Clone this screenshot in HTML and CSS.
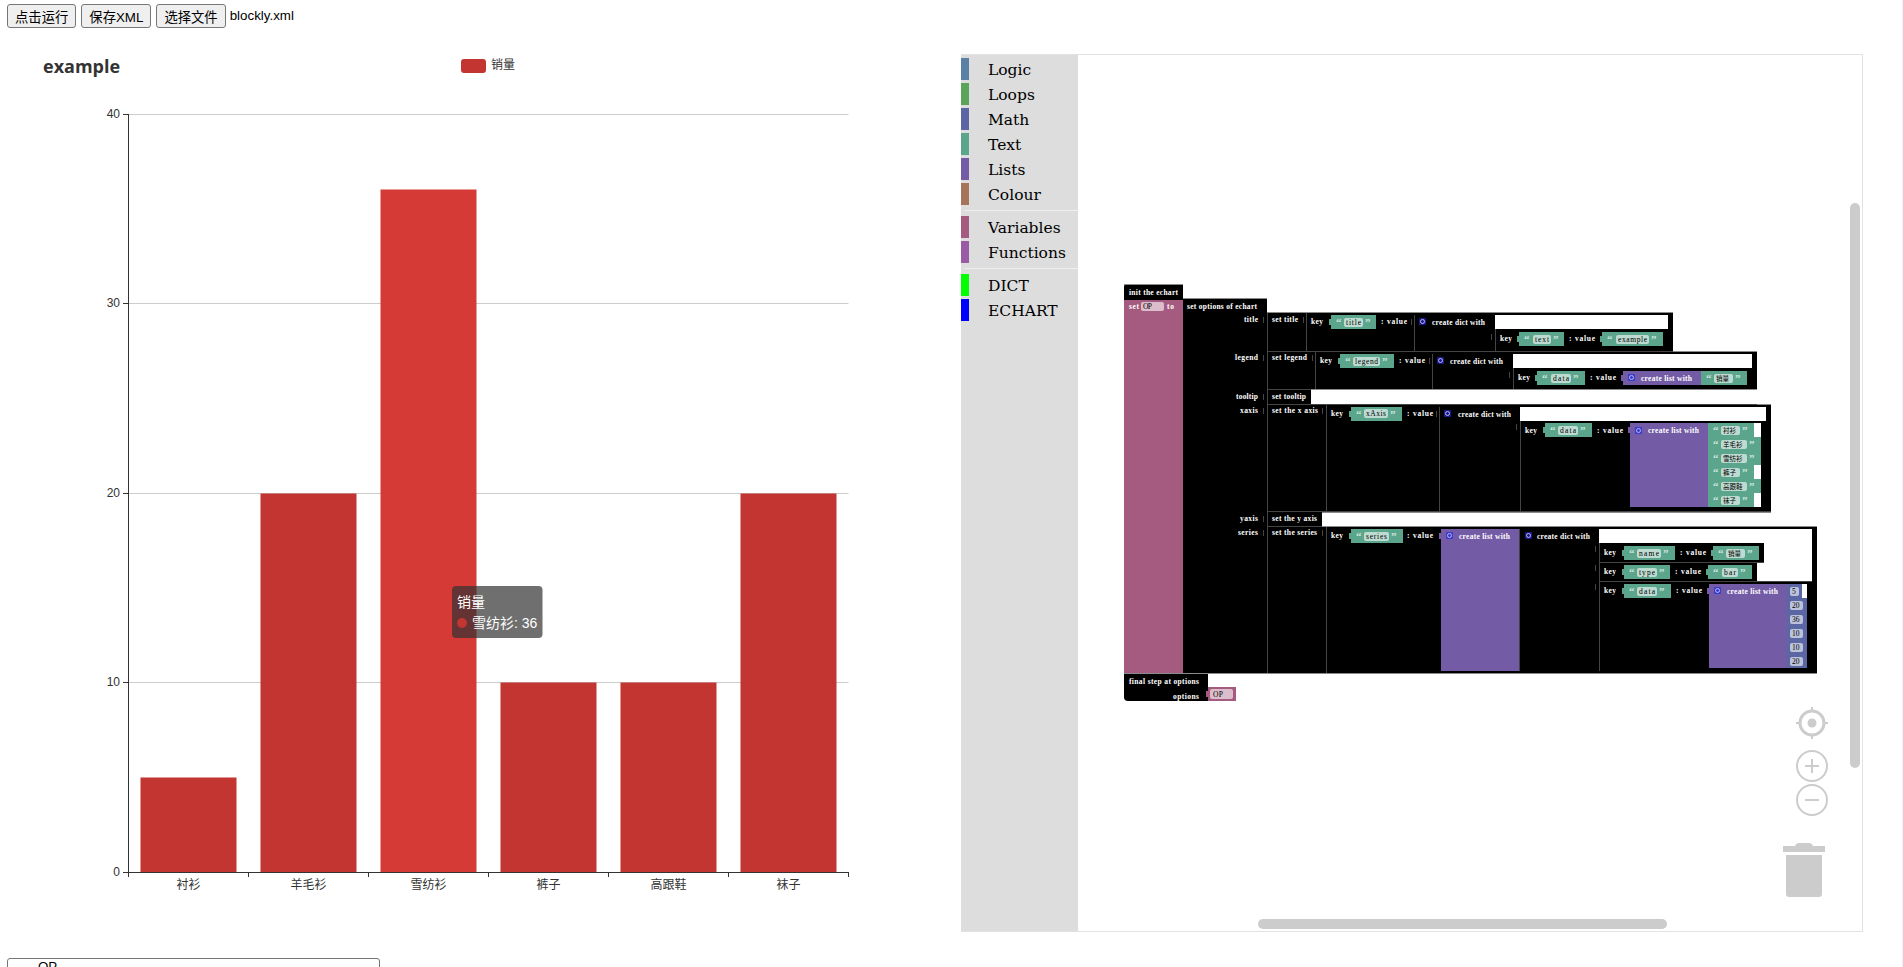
FILE: index.html
```html
<!DOCTYPE html>
<html lang="en">

<head>
    <title>Blockly echarts</title>
    <meta name="viewport" content="width=device-width, initial-scale=1.0">
    <link rel="stylesheet" href="styles.css">
</head>

<body>
    <div class="toolbar">
        <button>点击运行</button>
        <button>保存XML</button>
        <button>选择文件</button>
        <span class="file-name">blockly.xml</span>
    </div>

    <div class="main">
        <svg class="chart" width="961" height="900" viewBox="0 28 961 900">
            <text class="chart-title" x="43" y="73">example</text>
            <rect class="bar" x="461" y="59" width="25" height="14" rx="3"/>
            <text class="axis-text" x="491" y="69">销量</text>

            <path class="grid" d="M128.5 114.5H848.5M128.5 303.5H848.5M128.5 493.5H848.5M128.5 682.5H848.5"/>

            <rect class="bar" x="140.5" y="777.5" width="96" height="95"/>
            <rect class="bar" x="260.5" y="493.5" width="96" height="379"/>
            <rect class="bar-hover" x="380.5" y="189.5" width="96" height="683"/>
            <rect class="bar" x="500.5" y="682.5" width="96" height="190"/>
            <rect class="bar" x="620.5" y="682.5" width="96" height="190"/>
            <rect class="bar" x="740.5" y="493.5" width="96" height="379"/>

            <path class="axis" d="M128.5 114V872.5M123 114.5H128.5M123 303.5H128.5M123 493.5H128.5M123 682.5H128.5M123 872.5H848.5"/>
            <path class="axis" d="M128.5 872V877M248.5 872V877M368.5 872V877M488.5 872V877M608.5 872V877M728.5 872V877M848.5 872V877"/>

            <text class="axis-text y-label" x="120" y="118">40</text>
            <text class="axis-text y-label" x="120" y="307">30</text>
            <text class="axis-text y-label" x="120" y="497">20</text>
            <text class="axis-text y-label" x="120" y="686">10</text>
            <text class="axis-text y-label" x="120" y="876">0</text>

            <text class="axis-text x-label" x="188.5" y="889">衬衫</text>
            <text class="axis-text x-label" x="308.5" y="889">羊毛衫</text>
            <text class="axis-text x-label" x="428.5" y="889">雪纺衫</text>
            <text class="axis-text x-label" x="548.5" y="889">裤子</text>
            <text class="axis-text x-label" x="668.5" y="889">高跟鞋</text>
            <text class="axis-text x-label" x="788.5" y="889">袜子</text>

            <rect class="tooltip" x="452" y="586" width="90.5" height="52" rx="4"/>
            <text class="tooltip-text" x="457" y="607">销量</text>
            <circle class="bar" cx="462" cy="623" r="5"/>
            <text class="tooltip-text" x="472" y="628">雪纺衫: 36</text>
        </svg>

        <div class="workspace">
            <div class="toolbox">
                <div class="category"><span class="swatch logic"></span>Logic</div>
                <div class="category"><span class="swatch loops"></span>Loops</div>
                <div class="category"><span class="swatch math"></span>Math</div>
                <div class="category"><span class="swatch text"></span>Text</div>
                <div class="category"><span class="swatch lists"></span>Lists</div>
                <div class="category"><span class="swatch colour"></span>Colour</div>
                <div class="sep"></div>
                <div class="category"><span class="swatch variables"></span>Variables</div>
                <div class="category"><span class="swatch functions"></span>Functions</div>
                <div class="sep"></div>
                <div class="category"><span class="swatch dict"></span>DICT</div>
                <div class="category"><span class="swatch echart"></span>ECHART</div>
            </div>

            <!-- blocks are drawn in page coordinates, the viewBox starts at the canvas corner -->
            <svg class="blocks" viewBox="1078 55 784 876">
                <!-- black statement blocks -->
                <path class="edge" d="M1124 300V287q0-3 3-3H1183V300z"/>
                <rect class="var-block" x="1124" y="300" width="59" height="373"/>
                <path class="edge" d="M1183 298H1267V312H1673V351H1757V389H1311V404H1771V512H1322V526H1817V673H1183z"/>
                <path class="edge" d="M1124 673H1208V701H1128q-4 0-4-4z"/>

                <!-- white gaps left inside the rows -->
                <rect class="gap" x="1495" y="315" width="173" height="14"/>
                <rect class="gap" x="1513" y="354" width="239" height="14"/>
                <rect class="gap" x="1520" y="407" width="246" height="14"/>
                <rect class="gap" x="1599" y="529" width="213" height="14"/>
                <rect class="gap" x="1764" y="543" width="48" height="19"/>
                <rect class="gap" x="1757" y="562" width="55" height="19"/>

                <path class="line" d="M1267.5 312V673M1306.5 312V351M1414.5 315V351M1495.5 329V351M1267 351.5H1673"/>
                <path class="line" d="M1315.5 351V389M1432.5 354V389M1513.5 368V389M1267 389.5H1757"/>
                <path class="line" d="M1267 404.5H1771M1326.5 404V512M1439.5 407V511M1520.5 421V511M1267 511.5H1771"/>
                <path class="line" d="M1267 526.5H1817M1326.5 527V673M1519.5 529V671M1599.5 543V671M1599 562.5H1764M1599 581.5H1812"/>
                <path class="top-line" d="M1124 284.5H1183M1183 298.5H1267M1267 312.5H1673M1673 351.5H1757M1311 389.5H1757M1322 526.5H1817M1757 404.5H1771M1322 512.5H1771M1124 673.5H1817"/>

                <!-- sockets beside the inputs -->
                <path class="line" d="M1263.5 317V323M1263.5 355V361M1263.5 394V400M1263.5 408V414M1263.5 516V522M1263.5 530V536"/>
                <path class="line" d="M1303.5 317V323M1411.5 319V325M1491.5 334V340M1312.5 355V361M1429.5 358V364M1509.5 372V378M1322.5 408V414M1436.5 411V417M1516.5 424V430M1322.5 530V536M1595.5 546V552M1595.5 565V571M1595.5 584V590"/>

                <!-- output tabs of the value blocks -->
                <path class="str-block" d="M1329 319h2v6h-2zM1517 336h2v6h-2zM1600 336h2v6h-2zM1338 358h2v6h-2zM1535 375h2v6h-2zM1699 375h2v6h-2zM1349 411h2v6h-2zM1543 427h2v6h-2zM1706 427h2v6h-2zM1706 441h2v6h-2zM1706 455h2v6h-2zM1706 469h2v6h-2zM1706 483h2v6h-2zM1706 497h2v6h-2zM1349 533h2v6h-2zM1622 550h2v6h-2zM1711 550h2v6h-2zM1622 569h2v6h-2zM1706 569h2v6h-2zM1622 588h2v6h-2z"/>
                <path class="list-block" d="M1621 375h2v6h-2zM1628 427h2v6h-2zM1439 533h2v6h-2zM1707 588h2v6h-2z"/>
                <path class="num-block" d="M1785 588h2v6h-2zM1785 602h2v6h-2zM1785 616h2v6h-2zM1785 630h2v6h-2zM1785 644h2v6h-2zM1785 658h2v6h-2z"/>
                <path class="var-block" d="M1206 691h2v6h-2z"/>

                <!-- init and final step -->
                <text class="label" x="1129" y="295" textLength="49">init the echart</text>
                <text class="label" x="1129" y="309" textLength="10">set</text>
                <rect class="var-field" x="1141" y="302" width="23" height="9" rx="2"/>
                <text class="field-text" x="1143" y="309" textLength="9">OP</text>
                <text class="label" x="1167" y="309" textLength="7">to</text>
                <text class="label" x="1187" y="309" textLength="70">set options of echart</text>
                <text class="label" x="1129" y="684" textLength="70">final step at options</text>
                <text class="label" x="1173" y="699" textLength="26">options</text>
                <rect class="var-block" x="1208" y="687" width="28" height="14"/>
                <rect class="var-field" x="1210" y="689" width="23" height="10" rx="2"/>
                <text class="field-text" x="1213" y="697" textLength="10">OP</text>

                <!-- row labels -->
                <text class="label" x="1244" y="322" textLength="14">title</text>
                <text class="label" x="1235" y="360" textLength="23">legend</text>
                <text class="label" x="1236" y="399" textLength="22">tooltip</text>
                <text class="label" x="1240" y="413" textLength="18">xaxis</text>
                <text class="label" x="1240" y="521" textLength="18">yaxis</text>
                <text class="label" x="1238" y="535" textLength="20">series</text>

                <text class="label" x="1272" y="322" textLength="26">set title</text>
                <text class="label" x="1272" y="360" textLength="35">set legend</text>
                <text class="label" x="1272" y="399" textLength="34">set tooltip</text>
                <text class="label" x="1272" y="413" textLength="46">set the x axis</text>
                <text class="label" x="1272" y="521" textLength="45">set the y axis</text>
                <text class="label" x="1272" y="535" textLength="45">set the series</text>

                <!-- title -->
                <text class="label" x="1311" y="324" textLength="12">key</text>
                <rect class="str-block" x="1331" y="315" width="45" height="14"/>
                <text class="quote" x="1336" y="326">“</text>
                <rect class="str-field" x="1344" y="318" width="19" height="9" rx="2"/>
                <text class="field-text" x="1346" y="325" textLength="15">title</text>
                <text class="quote" x="1365" y="326">”</text>
                <text class="label" x="1381" y="324" textLength="26">: value</text>
                <rect class="mutator" x="1419" y="318" width="7" height="7" rx="1"/>
                <circle class="mutator-ring" cx="1422.5" cy="321.5" r="2"/>
                <text class="label" x="1432" y="325" textLength="53">create dict with</text>
                <text class="label" x="1500" y="341" textLength="12">key</text>
                <rect class="str-block" x="1519" y="332" width="45" height="14"/>
                <text class="quote" x="1524" y="343">“</text>
                <rect class="str-field" x="1533" y="335" width="18" height="9" rx="2"/>
                <text class="field-text" x="1535" y="342" textLength="14">text</text>
                <text class="quote" x="1553" y="343">”</text>
                <text class="label" x="1569" y="341" textLength="26">: value</text>
                <rect class="str-block" x="1602" y="332" width="61" height="14"/>
                <text class="quote" x="1607" y="343">“</text>
                <rect class="str-field" x="1616" y="335" width="33" height="9" rx="2"/>
                <text class="field-text" x="1618" y="342" textLength="29">example</text>
                <text class="quote" x="1651" y="343">”</text>

                <!-- legend -->
                <text class="label" x="1320" y="363" textLength="12">key</text>
                <rect class="str-block" x="1340" y="354" width="54" height="14"/>
                <text class="quote" x="1345" y="365">“</text>
                <rect class="str-field" x="1353" y="357" width="27" height="9" rx="2"/>
                <text class="field-text" x="1355" y="364" textLength="23">legend</text>
                <text class="quote" x="1382" y="365">”</text>
                <text class="label" x="1399" y="363" textLength="26">: value</text>
                <rect class="mutator" x="1437" y="357" width="7" height="7" rx="1"/>
                <circle class="mutator-ring" cx="1440.5" cy="360.5" r="2"/>
                <text class="label" x="1450" y="364" textLength="53">create dict with</text>
                <text class="label" x="1518" y="380" textLength="12">key</text>
                <rect class="str-block" x="1537" y="371" width="48" height="14"/>
                <text class="quote" x="1542" y="382">“</text>
                <rect class="str-field" x="1551" y="374" width="20" height="9" rx="2"/>
                <text class="field-text" x="1553" y="381" textLength="16">data</text>
                <text class="quote" x="1573" y="382">”</text>
                <text class="label" x="1590" y="380" textLength="26">: value</text>
                <rect class="list-block" x="1623" y="371" width="78" height="14"/>
                <rect class="mutator-list" x="1628" y="374" width="7" height="7" rx="1"/>
                <circle class="mutator-ring" cx="1631.5" cy="377.5" r="2"/>
                <text class="label" x="1641" y="381" textLength="51">create list with</text>
                <rect class="str-block" x="1701" y="371" width="46" height="14"/>
                <text class="quote" x="1706" y="382">“</text>
                <rect class="str-field" x="1714" y="374" width="19" height="9" rx="2"/>
                <text class="cjk-text" x="1716" y="381">销量</text>
                <text class="quote" x="1735" y="382">”</text>

                <!-- xaxis -->
                <text class="label" x="1331" y="416" textLength="12">key</text>
                <rect class="str-block" x="1351" y="407" width="51" height="14"/>
                <text class="quote" x="1356" y="418">“</text>
                <rect class="str-field" x="1364" y="409" width="24" height="9" rx="2"/>
                <text class="field-text" x="1366" y="416" textLength="20">xAxis</text>
                <text class="quote" x="1390" y="418">”</text>
                <text class="label" x="1407" y="416" textLength="26">: value</text>
                <rect class="mutator" x="1444" y="410" width="7" height="7" rx="1"/>
                <circle class="mutator-ring" cx="1447.5" cy="413.5" r="2"/>
                <text class="label" x="1458" y="417" textLength="53">create dict with</text>
                <text class="label" x="1525" y="433" textLength="12">key</text>
                <rect class="str-block" x="1545" y="423" width="47" height="14"/>
                <text class="quote" x="1550" y="434">“</text>
                <rect class="str-field" x="1558" y="426" width="20" height="9" rx="2"/>
                <text class="field-text" x="1560" y="433" textLength="16">data</text>
                <text class="quote" x="1580" y="434">”</text>
                <text class="label" x="1597" y="433" textLength="26">: value</text>
                <rect class="list-block" x="1630" y="423" width="78" height="84"/>
                <rect class="mutator-list" x="1635" y="427" width="7" height="7" rx="1"/>
                <circle class="mutator-ring" cx="1638.5" cy="430.5" r="2"/>
                <text class="label" x="1648" y="433" textLength="51">create list with</text>

                <rect class="gap" x="1754" y="423" width="7" height="14"/>
                <rect class="gap" x="1754" y="465" width="7" height="14"/>
                <rect class="gap" x="1754" y="493" width="7" height="14"/>
                <rect class="str-block" x="1708" y="423" width="46" height="14"/>
                <rect class="str-block" x="1708" y="437" width="53" height="14"/>
                <rect class="str-block" x="1708" y="451" width="53" height="14"/>
                <rect class="str-block" x="1708" y="465" width="46" height="14"/>
                <rect class="str-block" x="1708" y="479" width="53" height="14"/>
                <rect class="str-block" x="1708" y="493" width="46" height="14"/>
                <text class="quote" x="1713" y="434">“</text>
                <text class="quote" x="1713" y="448">“</text>
                <text class="quote" x="1713" y="462">“</text>
                <text class="quote" x="1713" y="476">“</text>
                <text class="quote" x="1713" y="490">“</text>
                <text class="quote" x="1713" y="504">“</text>
                <rect class="str-field" x="1721" y="426" width="19" height="9" rx="2"/>
                <rect class="str-field" x="1721" y="440" width="26" height="9" rx="2"/>
                <rect class="str-field" x="1721" y="454" width="26" height="9" rx="2"/>
                <rect class="str-field" x="1721" y="468" width="19" height="9" rx="2"/>
                <rect class="str-field" x="1721" y="482" width="26" height="9" rx="2"/>
                <rect class="str-field" x="1721" y="496" width="19" height="9" rx="2"/>
                <text class="cjk-text" x="1723" y="433">衬衫</text>
                <text class="cjk-text" x="1723" y="447">羊毛衫</text>
                <text class="cjk-text" x="1723" y="461">雪纺衫</text>
                <text class="cjk-text" x="1723" y="475">裤子</text>
                <text class="cjk-text" x="1723" y="489">高跟鞋</text>
                <text class="cjk-text" x="1723" y="503">袜子</text>
                <text class="quote" x="1742" y="434">”</text>
                <text class="quote" x="1749" y="448">”</text>
                <text class="quote" x="1749" y="462">”</text>
                <text class="quote" x="1742" y="476">”</text>
                <text class="quote" x="1749" y="490">”</text>
                <text class="quote" x="1742" y="504">”</text>

                <!-- series -->
                <text class="label" x="1331" y="538" textLength="12">key</text>
                <rect class="str-block" x="1351" y="529" width="52" height="14"/>
                <text class="quote" x="1356" y="540">“</text>
                <rect class="str-field" x="1364" y="532" width="25" height="9" rx="2"/>
                <text class="field-text" x="1366" y="539" textLength="21">series</text>
                <text class="quote" x="1391" y="540">”</text>
                <text class="label" x="1407" y="538" textLength="26">: value</text>
                <rect class="list-block" x="1441" y="529" width="78" height="142"/>
                <rect class="mutator-list" x="1446" y="532" width="7" height="7" rx="1"/>
                <circle class="mutator-ring" cx="1449.5" cy="535.5" r="2"/>
                <text class="label" x="1459" y="539" textLength="51">create list with</text>
                <rect class="mutator" x="1525" y="532" width="7" height="7" rx="1"/>
                <circle class="mutator-ring" cx="1528.5" cy="535.5" r="2"/>
                <text class="label" x="1537" y="539" textLength="53">create dict with</text>

                <text class="label" x="1604" y="555" textLength="12">key</text>
                <rect class="str-block" x="1624" y="546" width="51" height="14"/>
                <text class="quote" x="1629" y="557">“</text>
                <rect class="str-field" x="1637" y="549" width="24" height="9" rx="2"/>
                <text class="field-text" x="1639" y="556" textLength="20">name</text>
                <text class="quote" x="1663" y="557">”</text>
                <text class="label" x="1680" y="555" textLength="26">: value</text>
                <rect class="str-block" x="1713" y="546" width="46" height="14"/>
                <text class="quote" x="1718" y="557">“</text>
                <rect class="str-field" x="1726" y="549" width="19" height="9" rx="2"/>
                <text class="cjk-text" x="1728" y="556">销量</text>
                <text class="quote" x="1747" y="557">”</text>

                <text class="label" x="1604" y="574" textLength="12">key</text>
                <rect class="str-block" x="1624" y="565" width="46" height="14"/>
                <text class="quote" x="1629" y="576">“</text>
                <rect class="str-field" x="1637" y="568" width="20" height="9" rx="2"/>
                <text class="field-text" x="1639" y="575" textLength="16">type</text>
                <text class="quote" x="1659" y="576">”</text>
                <text class="label" x="1675" y="574" textLength="26">: value</text>
                <rect class="str-block" x="1708" y="565" width="44" height="14"/>
                <text class="quote" x="1713" y="576">“</text>
                <rect class="str-field" x="1722" y="568" width="16" height="9" rx="2"/>
                <text class="field-text" x="1724" y="575" textLength="12">bar</text>
                <text class="quote" x="1740" y="576">”</text>

                <text class="label" x="1604" y="593" textLength="12">key</text>
                <rect class="str-block" x="1624" y="584" width="47" height="14"/>
                <text class="quote" x="1629" y="595">“</text>
                <rect class="str-field" x="1637" y="587" width="20" height="9" rx="2"/>
                <text class="field-text" x="1639" y="594" textLength="16">data</text>
                <text class="quote" x="1659" y="595">”</text>
                <text class="label" x="1676" y="593" textLength="26">: value</text>
                <rect class="list-block" x="1709" y="584" width="78" height="84"/>
                <rect class="mutator-list" x="1714" y="587" width="7" height="7" rx="1"/>
                <circle class="mutator-ring" cx="1717.5" cy="590.5" r="2"/>
                <text class="label" x="1727" y="594" textLength="51">create list with</text>

                <rect class="gap" x="1802" y="584" width="5" height="14"/>
                <rect class="num-block" x="1787" y="584" width="15" height="14"/>
                <rect class="num-block" x="1787" y="598" width="20" height="70"/>
                <rect class="num-field" x="1790" y="587" width="9" height="9" rx="2"/>
                <rect class="num-field" x="1790" y="601" width="13" height="9" rx="2"/>
                <rect class="num-field" x="1790" y="615" width="13" height="9" rx="2"/>
                <rect class="num-field" x="1790" y="629" width="13" height="9" rx="2"/>
                <rect class="num-field" x="1790" y="643" width="13" height="9" rx="2"/>
                <rect class="num-field" x="1790" y="657" width="13" height="9" rx="2"/>
                <text class="num-text" x="1792" y="594">5</text>
                <text class="num-text" x="1792" y="608">20</text>
                <text class="num-text" x="1792" y="622">36</text>
                <text class="num-text" x="1792" y="636">10</text>
                <text class="num-text" x="1792" y="650">10</text>
                <text class="num-text" x="1792" y="664">20</text>

                <!-- workspace controls -->
                <g class="control">
                    <circle class="ring" cx="1812" cy="723" r="12"/>
                    <circle class="dot" cx="1812" cy="723" r="4.5"/>
                    <path class="thin" d="M1812 707V711M1812 735V739M1796 723H1800M1824 723H1828"/>
                    <circle class="thin" cx="1812" cy="766" r="15"/>
                    <path class="thin" d="M1805 766H1819M1812 759V773"/>
                    <circle class="thin" cx="1812" cy="800" r="15"/>
                    <path class="thin" d="M1805 800H1819"/>
                    <path class="dot" d="M1783 846H1795q1-3 4-3H1809q3 0 4 3H1825V852H1783z"/>
                    <path class="dot" d="M1786 855H1822V894q0 3-3 3H1789q-3 0-3-3z"/>
                </g>
            </svg>

            <div class="scroll-v"></div>
            <div class="scroll-h"></div>
        </div>
    </div>

    <select class="var-list" size="4">
        <option>OP</option>
    </select>
</body>
</html>
```

FILE: styles.css
```css
html {
    overflow: hidden;
}
body {
    margin: 0;
    padding: 4px 7px 0;
    min-height: 100vh;
    box-sizing: border-box;
    font-family: "Liberation Sans", "Noto Sans CJK SC", sans-serif;
    font-size: 13.33px;
    color: #000;
    background-color: #fff;
    border-right: 1px solid #f0f0f0;
}
.toolbar {
    display: flex;
    align-items: flex-start;
    height: 24px;
}
.toolbar button {
    height: 24px;
    padding: 0 7px;
    margin-right: 5px;
    font-family: "Liberation Sans", "Noto Sans CJK SC", sans-serif;
    font-size: 13.33px;
    color: #000;
    background-color: #efefef;
    border: 1px solid #767676;
    border-radius: 3px;
}
.file-name {
    line-height: 24px;
    margin-left: -1px;
}

.main {
    display: flex;
    height: 930px;
    margin-left: -7px;
}
.chart {
    flex: none;
    margin-top: 0;
}
.chart-title {
    font-family: "Open Sans", "Noto Sans", sans-serif;
    font-size: 18px;
    font-weight: bold;
    fill: #333;
}
.axis-text {
    font-family: "Liberation Sans", "Noto Sans CJK SC", sans-serif;
    font-size: 12px;
    fill: #333;
}
.y-label {
    text-anchor: end;
}
.x-label {
    text-anchor: middle;
}
.bar {
    fill: #c23531;
}
.bar-hover {
    fill: #d63a36;
}
.grid {
    stroke: #ccc;
    stroke-width: 1;
    fill: none;
}
.axis {
    stroke: #333;
    stroke-width: 1;
    fill: none;
}
.tooltip {
    fill: rgba(50, 50, 50, 0.7);
}
.tooltip-text {
    font-family: "Liberation Sans", "Noto Sans CJK SC", sans-serif;
    font-size: 14px;
    fill: #fff;
}

.workspace {
    position: relative;
    display: flex;
    flex: none;
    width: 901px;
    height: 876px;
    margin-top: 26px;
    background-color: #fff;
    border: 1px solid #e2e2e2;
    border-left: none;
    box-sizing: content-box;
}
.toolbox {
    flex: none;
    width: 117px;
    padding-top: 3px;
    background-color: #ddd;
    font-family: "DejaVu Serif", serif;
    font-size: 15.5px;
}
.category {
    display: flex;
    align-items: flex-start;
    height: 22px;
    line-height: 24px;
    margin-bottom: 3px;
}
.swatch {
    flex: none;
    width: 8px;
    height: 22px;
    margin-right: 19px;
}
.sep {
    height: 1px;
    margin: 5px 0 5px 3px;
    background-color: #eee;
}
.logic { background-color: #5b80a5; }
.loops { background-color: #5ba55b; }
.math { background-color: #5b67a5; }
.text { background-color: #5ba58c; }
.lists { background-color: #745ba5; }
.colour { background-color: #a5745b; }
.variables { background-color: #a55b80; }
.functions { background-color: #995ba5; }
.dict { background-color: #00ff00; }
.echart { background-color: #0000ff; }

.blocks {
    display: block;
    flex: 1;
    height: 100%;
}
.edge { fill: #000; }
.gap { fill: #fff; }
.line { stroke: #444; fill: none; }
.top-line { stroke: #8a8a8a; fill: none; }
.var-block { fill: #a55b80; }
.str-block { fill: #5ba58c; }
.list-block { fill: #745ba5; }
.num-block { fill: #5b67a5; }
.var-field { fill: #dbbdcc; }
.str-field { fill: #bddbd1; }
.num-field { fill: #bdc2db; }
.mutator { fill: #1a1a8c; }
.mutator-list { fill: #3b3bd0; }
.mutator-ring {
    fill: none;
    stroke: #b8b8e8;
    stroke-width: 1;
}
.label, .field-text, .num-text, .quote {
    font-family: "Liberation Serif", serif;
    font-size: 7.5px;
}
.label {
    font-weight: bold;
    fill: #fff;
}
.field-text, .num-text {
    fill: #000;
}
.quote {
    font-size: 11px;
    font-weight: bold;
    fill: #cfe6dd;
}
.cjk-text {
    font-family: "Noto Sans CJK SC", sans-serif;
    font-size: 6.5px;
    fill: #000;
}
.control .ring, .control .thin {
    fill: none;
    stroke: #ccc;
    stroke-width: 2;
}
.control .ring {
    stroke-width: 3;
}
.control .dot {
    fill: #ccc;
}
.scroll-v {
    position: absolute;
    top: 148px;
    right: 2px;
    width: 10px;
    height: 565px;
    background-color: #ccc;
    border-radius: 5px;
}
.scroll-h {
    position: absolute;
    left: 297px;
    bottom: 2px;
    width: 409px;
    height: 10px;
    background-color: #ccc;
    border-radius: 5px;
}

.var-list {
    display: block;
    width: 373px;
    margin-top: 0;
    font-family: "Liberation Sans", sans-serif;
    font-size: 13.33px;
    padding-left: 28px;
    border: 1px solid #767676;
    border-radius: 3px;
    overflow-y: scroll;
}
.var-list::-webkit-scrollbar {
    width: 17px;
    background-color: #f0f0f0;
}
```
